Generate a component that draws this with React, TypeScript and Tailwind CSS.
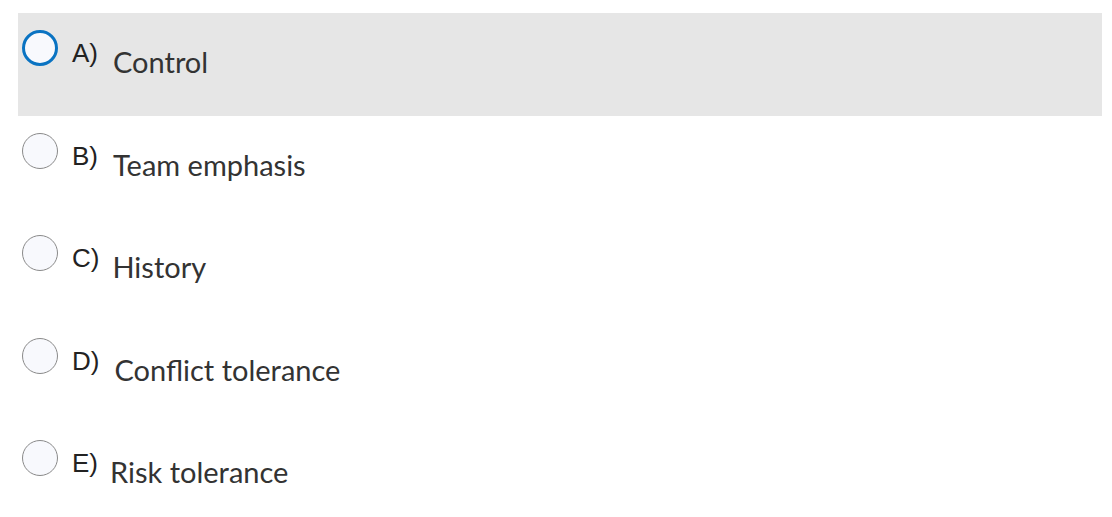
const options = [
  { letter: 'A)', text: 'Control', selected: true, shift: 'ml-[15px]' },
  { letter: 'B)', text: 'Team emphasis', selected: false, shift: 'ml-[15px]' },
  { letter: 'C)', text: 'History', selected: false, shift: 'ml-[13px]' },
  { letter: 'D)', text: 'Conflict tolerance', selected: false, shift: 'ml-[15px]' },
  { letter: 'E)', text: 'Risk tolerance', selected: false, shift: 'ml-[12px]' },
];

export default function App() {
  return (
    <div className="w-[1112px] h-[517px] bg-white pt-[13px] pl-[18px] pr-[10px]">
      {options.map((o) => (
        <div
          key={o.letter}
          className={`flex items-start h-[102.5px] ${o.selected ? 'bg-[#e6e6e6]' : ''}`}
        >
          <div
            className={`mt-[17px] ml-[4px] w-[36px] h-[36px] rounded-full bg-[#f8f9fd] shrink-0 ${
              o.selected ? 'border-[3px] border-[#0a73c2]' : 'border border-[#8a8a8a]'
            }`}
          />
          <span className="ml-[14px] mt-[23px] text-[26px] leading-[34px] text-[#222] font-['Liberation_Sans',sans-serif]">
            {o.letter}
          </span>
          <span className={`${o.shift} mt-[30px] text-[29px] leading-[38px] text-[#333] font-['Lato',sans-serif]`}>
            {o.text}
          </span>
        </div>
      ))}
    </div>
  );
}
